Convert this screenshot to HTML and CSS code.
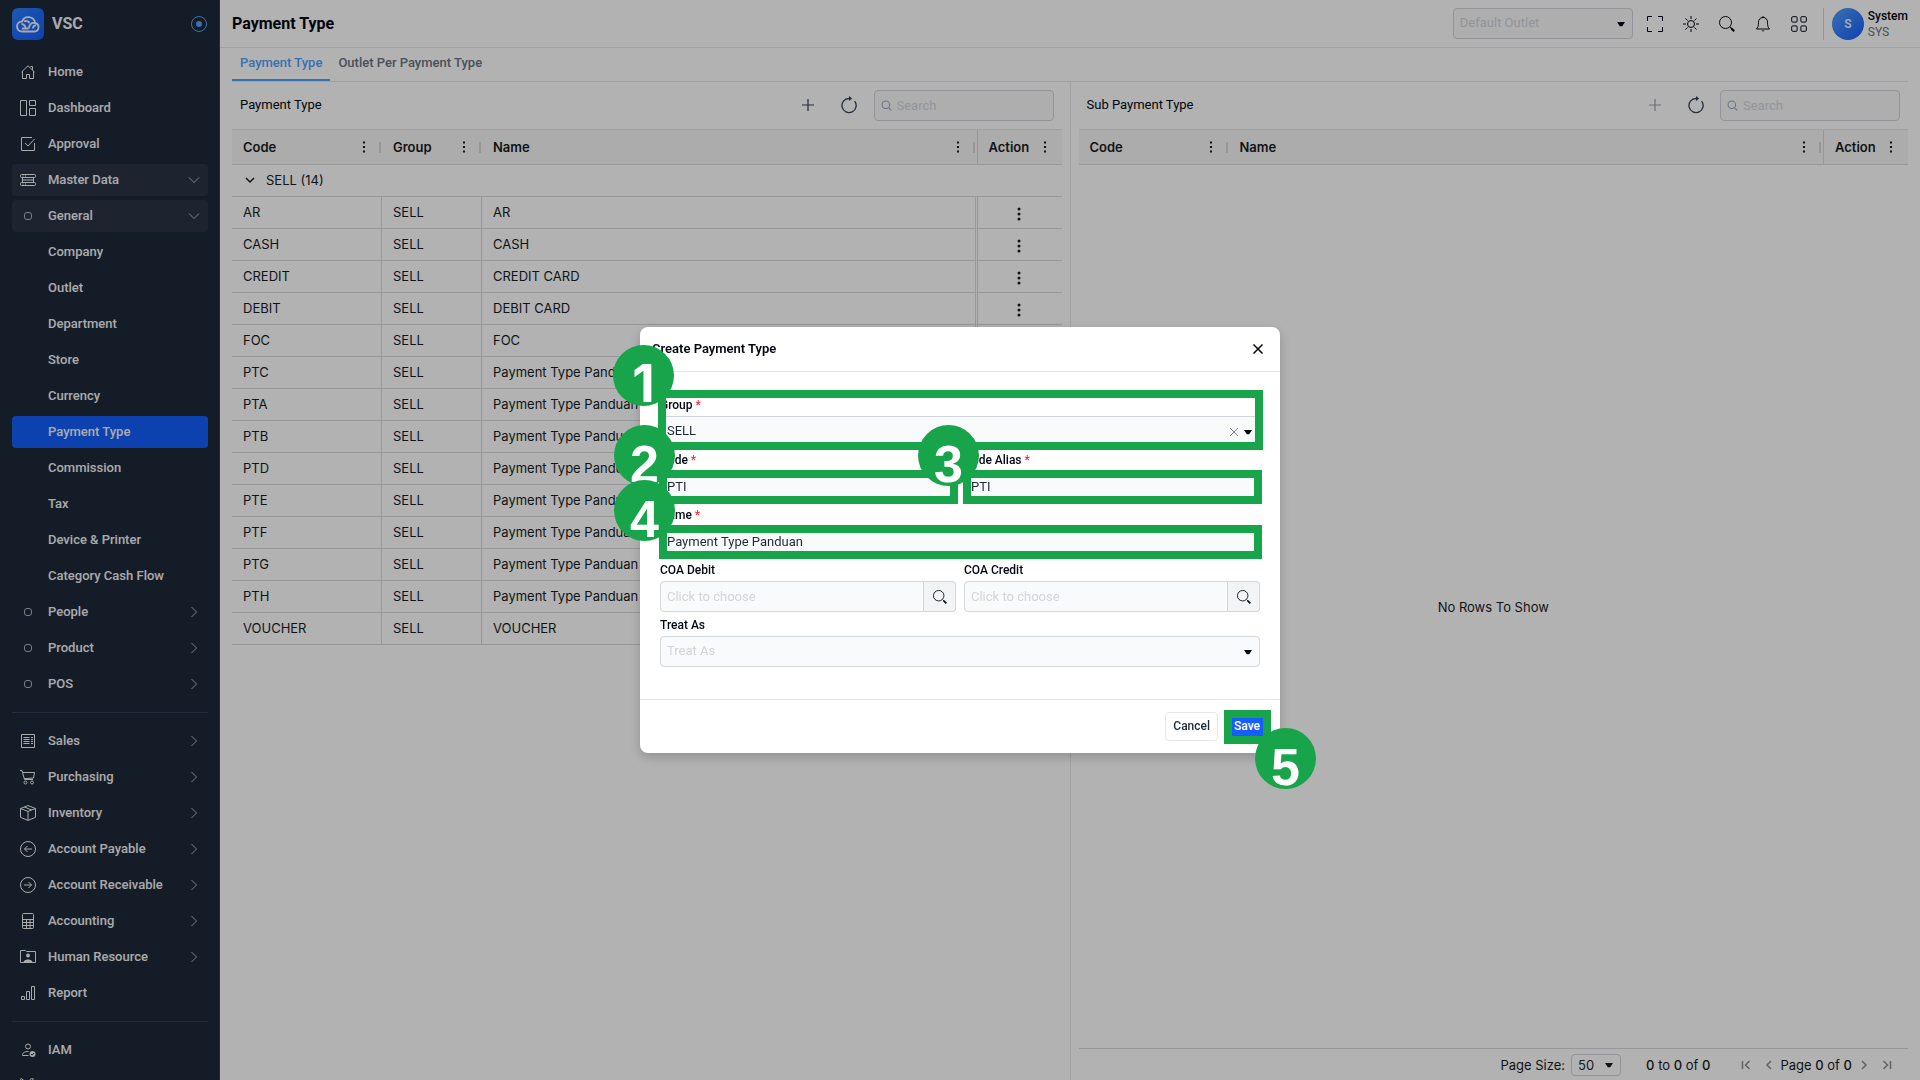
FILE: index.html
```html
<!DOCTYPE html>
<html lang="en">
<head>
<meta charset="utf-8">
<meta name="viewport" content="width=device-width, initial-scale=1">
<title>Payment Type</title>
<link rel="stylesheet" href="styles.css">
</head>
<body>
<svg class="sprite" aria-hidden="true">
  <symbol id="i-home" viewBox="0 0 16 16"><path d="M1.5 8 8 1.8 14.5 8M2.5 7.2v7.3h4v-4h3v4h4V7.2M10.500 2.500h2v3.500"/></symbol>
  <symbol id="i-dash" viewBox="0 0 16 16"><path d="M.5.5h6v15h-6zM9.500.5h6v5h-6zM9.500 8.500h6v7h-6z"/></symbol>
  <symbol id="i-check" viewBox="0 0 16 16"><path d="M12 1.500H1.500v13h13V7M5 7l3 3 6.500-7"/></symbol>
  <symbol id="i-stack" viewBox="0 0 16 16"><rect x=".5" y="2.500" width="15" height="3" rx="1"/><rect x=".5" y="10.500" width="15" height="3" rx="1"/><path d="M2.500 5.500v5M13.500 5.500v5M3 8h10M2.500 4h1M5 4h1M2.500 12h1M5 12h1"/></symbol>
  <symbol id="i-dot" viewBox="0 0 16 16"><rect x="4.500" y="4.500" width="7" height="7" rx="2.500"/></symbol>
  <symbol id="i-down" viewBox="0 0 16 16"><path d="m3 5.500 5 5 5-5"/></symbol>
  <symbol id="i-right" viewBox="0 0 16 16"><path d="m5.500 3 5 5-5 5"/></symbol>
  <symbol id="i-sales" viewBox="0 0 16 16"><path d="M1.500 1.500h13v13h-13zM3.500 4.500h6M3.500 6.500h6M3.500 8.500h6M3.500 10.500h6M11 4.500h2M11 6.500h2M11 8.500h2M11 10.500h2"/></symbol>
  <symbol id="i-cart" viewBox="0 0 16 16"><path d="M0 1.500h2l2.500 9H13M2.800 3.500h11.700l-1 5.500-9.200.7"/><circle cx="5.500" cy="13.500" r="1.500"/><circle cx="12" cy="13.500" r="1.500"/></symbol>
  <symbol id="i-box" viewBox="0 0 16 16"><path d="M8 .6 15.500 3.500v8.800L8 15.400.5 12.300V3.500zM.5 3.500 8 6.400l7.500-2.900M8 6.400v9M4.300 2 11.800 5"/></symbol>
  <symbol id="i-payable" viewBox="0 0 16 16"><circle cx="8" cy="8" r="7.500"/><path d="M12 8H4.500M7.500 5l-3 3 3 3"/></symbol>
  <symbol id="i-receive" viewBox="0 0 16 16"><circle cx="8" cy="8" r="7.500"/><path d="M4 8h7.500M8.500 5l3 3-3 3"/></symbol>
  <symbol id="i-calc" viewBox="0 0 16 16"><rect x="2.500" y=".5" width="11" height="15" rx="1"/><path d="M2.500 6.500h11M2.500 9.500h11M2.500 12.500h11M6.500 6.500v9M10 6.500v9"/></symbol>
  <symbol id="i-human" viewBox="0 0 16 16"><path d="M.5 13.500v-12h5l1 1h9v11zM4 13.500c0-3 8-3 8 0"/><circle class="fill" cx="8" cy="6.500" r="2"/><path class="fill" d="M3.500 13.500c0-4 9-4 9 0z"/></symbol>
  <symbol id="i-bars" viewBox="0 0 16 16"><path d="M1.500 11.500h3v3h-3zM6.500 6.500h3v8h-3zM11.500 1.500h3v13h-3z"/></symbol>
  <symbol id="i-user" viewBox="0 0 16 16"><circle cx="8" cy="4.500" r="2.500"/><path d="M8.500 13.500h-6c0-3 2-4 6-4"/><circle class="fill" cx="12.500" cy="12" r="3"/><path class="mark" d="m11 12 1.200 1.200L14 11"/></symbol>
  <symbol id="i-tools" viewBox="0 0 16 16"><path d="M1 .5 3.500 2 12 10.500l3 3-1.500 1.500-3-3L2 4 .5 1.500zM13.500.8 11.500 3v2h2l2-2c.5 3-2 4.500-4 3.500L4 14c-1.500 1.500-3.500-.500-2.500-2L9 5C8.500 2.500 10.500 0 13.500.8z"/></symbol>
  <symbol id="i-search" viewBox="0 0 16 16"><circle cx="6.500" cy="6.500" r="6"/><path d="m11 11 1.500 1.500"/><path class="bold" d="m12 12 3.200 3.200"/></symbol>
  <symbol id="i-find" viewBox="0 0 16 16"><circle cx="7" cy="7" r="5.500"/><path d="m11 11 4 4"/></symbol>
  <symbol id="i-plus" viewBox="0 0 16 16"><path d="M8 2v12M2 8h12"/></symbol>
  <symbol id="i-reload" viewBox="0 0 16 16"><path d="M8 2.200A6.300 6.300 0 1 0 13 4.600"/><path class="fill" d="M8 0v4.500L10.800 2.200z"/></symbol>
  <symbol id="i-full" viewBox="0 0 16 16"><path d="M.5 5V.5H5M11 .5h4.500V5M15.500 11v4.500H11M5 15.500H.5V11"/></symbol>
  <symbol id="i-sun" viewBox="0 0 16 16"><circle cx="8" cy="8" r="3.500"/><path d="M8 0v3M8 13v3M0 8h3M13 8h3M2.500 2.500l2 2M11.500 11.500l2 2M13.500 2.500l-2 2M4.500 11.500l-2 2"/></symbol>
  <symbol id="i-bell" viewBox="0 0 16 16"><path d="M8 1.500c-3 0-4.500 2-4.500 5 0 3-.500 5-2 6.500h13c-1.500-1.500-2-3.500-2-6.500 0-3-1.500-5-4.500-5zM8 0v1.500"/><path class="fill" d="M6.500 14.500h3L8 15.800z"/></symbol>
  <symbol id="i-grid" viewBox="0 0 16 16"><rect x=".7" y=".7" width="5.400" height="5.400" rx="1"/><rect x="9.900" y=".7" width="5.400" height="5.400" rx="1"/><rect x=".7" y="9.900" width="5.400" height="5.400" rx="1"/><rect x="9.900" y="9.900" width="5.400" height="5.400" rx="1"/></symbol>
  <symbol id="i-dots" viewBox="0 0 16 16"><path class="fill" d="M7 2.500h2v2H7zM7 7h2v2H7zM7 11.500h2v2H7z"/></symbol>
  <symbol id="i-kebab" viewBox="0 0 16 16"><circle class="fill" cx="8" cy="3" r="1.500"/><circle class="fill" cx="8" cy="8" r="1.500"/><circle class="fill" cx="8" cy="13" r="1.500"/></symbol>
  <symbol id="i-caret" viewBox="0 0 16 16"><path class="fill" d="M4 6h8l-2.800 4.200H6.800z"/></symbol>
  <symbol id="i-close" viewBox="0 0 16 16"><path d="m3.500 3.500 9 9M12.500 3.500l-9 9"/></symbol>
  <symbol id="i-group" viewBox="0 0 16 16"><path d="m4 6 4 4 4-4"/></symbol>
  <symbol id="i-first" viewBox="0 0 16 16"><path d="M4.500 4v8M11.500 4l-4 4 4 4"/></symbol>
  <symbol id="i-prev" viewBox="0 0 16 16"><path d="m10 4-4 4 4 4"/></symbol>
  <symbol id="i-next" viewBox="0 0 16 16"><path d="m6 4 4 4-4 4"/></symbol>
  <symbol id="i-last" viewBox="0 0 16 16"><path d="M11.500 4v8M4.500 4l4 4-4 4"/></symbol>
</svg>

<div class="app">
  <aside class="sidebar">
    <div class="brand">
      <svg class="logo" viewBox="0 0 32 32" aria-hidden="true">
        <defs><linearGradient id="lg" x1="0" y1="0" x2="1" y2="1"><stop offset="0" stop-color="#2b7fff"/><stop offset="1" stop-color="#155dfc"/></linearGradient></defs>
        <rect width="32" height="32" rx="6" fill="url(#lg)"/>
        <path d="M10 23.500h12.500a4.300 4.300 0 0 0 .6-8.500A6.800 6.800 0 0 0 10 13.500a5 5 0 0 0 0 10zM10 20.500h6.500M13.500 20.500a4 4 0 0 0-4-4.500M17 20.500c0-4 2.500-6 5.500-5.500M21 20.500c0-2 1-3.200 3-3.200M17.500 15c-1-2-3.500-2.500-5.500-1.500" fill="none" stroke="#f3f4f6" stroke-width="1.800"/>
      </svg>
      <span class="brand-name">VSC</span>
      <button class="pin" type="button" aria-label="Pin menu"><span></span></button>
    </div>
    <nav class="nav" aria-label="Main">
      <a href="#"><svg><use href="#i-home"/></svg><span>Home</span></a>
      <a href="#"><svg><use href="#i-dash"/></svg><span>Dashboard</span></a>
      <a href="#"><svg><use href="#i-check"/></svg><span>Approval</span></a>
      <a class="open" href="#"><svg><use href="#i-stack"/></svg><span>Master Data</span><svg class="chev"><use href="#i-down"/></svg></a>
      <a class="open" href="#"><svg class="dim"><use href="#i-dot"/></svg><span>General</span><svg class="chev"><use href="#i-down"/></svg></a>
      <a class="sub" href="#"><span>Company</span></a>
      <a class="sub" href="#"><span>Outlet</span></a>
      <a class="sub" href="#"><span>Department</span></a>
      <a class="sub" href="#"><span>Store</span></a>
      <a class="sub" href="#"><span>Currency</span></a>
      <a class="sub active" href="#" aria-current="page"><span>Payment Type</span></a>
      <a class="sub" href="#"><span>Commission</span></a>
      <a class="sub" href="#"><span>Tax</span></a>
      <a class="sub" href="#"><span>Device &amp; Printer</span></a>
      <a class="sub" href="#"><span>Category Cash Flow</span></a>
      <a href="#"><svg class="dim"><use href="#i-dot"/></svg><span>People</span><svg class="chev"><use href="#i-right"/></svg></a>
      <a href="#"><svg class="dim"><use href="#i-dot"/></svg><span>Product</span><svg class="chev"><use href="#i-right"/></svg></a>
      <a href="#"><svg class="dim"><use href="#i-dot"/></svg><span>POS</span><svg class="chev"><use href="#i-right"/></svg></a>
      <hr>
      <a href="#"><svg><use href="#i-sales"/></svg><span>Sales</span><svg class="chev"><use href="#i-right"/></svg></a>
      <a href="#"><svg><use href="#i-cart"/></svg><span>Purchasing</span><svg class="chev"><use href="#i-right"/></svg></a>
      <a href="#"><svg><use href="#i-box"/></svg><span>Inventory</span><svg class="chev"><use href="#i-right"/></svg></a>
      <a href="#"><svg><use href="#i-payable"/></svg><span>Account Payable</span><svg class="chev"><use href="#i-right"/></svg></a>
      <a href="#"><svg><use href="#i-receive"/></svg><span>Account Receivable</span><svg class="chev"><use href="#i-right"/></svg></a>
      <a href="#"><svg><use href="#i-calc"/></svg><span>Accounting</span><svg class="chev"><use href="#i-right"/></svg></a>
      <a href="#"><svg><use href="#i-human"/></svg><span>Human Resource</span><svg class="chev"><use href="#i-right"/></svg></a>
      <a href="#"><svg><use href="#i-bars"/></svg><span>Report</span></a>
      <hr>
      <a href="#"><svg><use href="#i-user"/></svg><span>IAM</span></a>
      <a href="#" aria-label="Tools"><svg><use href="#i-tools"/></svg></a>
    </nav>
  </aside>

  <main class="main">
    <header class="topbar">
      <h1>Payment Type</h1>
      <div class="select top-select">
        <select class="empty" aria-label="Default Outlet"><option>Default Outlet</option></select>
        <svg><use href="#i-caret"/></svg>
      </div>
      <div class="tools">
        <button type="button" aria-label="Full screen"><svg><use href="#i-full"/></svg></button>
        <button type="button" aria-label="Theme"><svg><use href="#i-sun"/></svg></button>
        <button type="button" aria-label="Search"><svg><use href="#i-search"/></svg></button>
        <button type="button" aria-label="Notifications"><svg><use href="#i-bell"/></svg></button>
        <button type="button" aria-label="Apps"><svg><use href="#i-grid"/></svg></button>
      </div>
      <div class="user">
        <span class="avatar">S</span>
        <div><strong>System</strong><small>SYS</small></div>
      </div>
    </header>

    <div class="content">
      <nav class="tabs" aria-label="Sections">
        <a class="current" href="#">Payment Type</a>
        <a href="#">Outlet Per Payment Type</a>
      </nav>
      <div class="panes">
        <section class="pane">
          <div class="toolbar">
            <h2>Payment Type</h2>
            <button type="button" aria-label="Add"><svg><use href="#i-plus"/></svg></button>
            <button type="button" aria-label="Reload"><svg class="big"><use href="#i-reload"/></svg></button>
            <label class="search"><svg><use href="#i-find"/></svg><input type="search" placeholder="Search" aria-label="Search payment type"></label>
          </div>
          <table class="grid">
            <colgroup><col class="c-code"><col class="c-group"><col><col class="c-action"></colgroup>
            <thead><tr>
              <th><div class="th"><span>Code</span><svg><use href="#i-dots"/></svg><i></i></div></th>
              <th><div class="th"><span>Group</span><svg><use href="#i-dots"/></svg><i></i></div></th>
              <th><div class="th"><span>Name</span><svg><use href="#i-dots"/></svg><i></i></div></th>
              <th class="action"><div class="th"><span>Action</span><svg><use href="#i-dots"/></svg></div></th>
            </tr></thead>
            <tbody>
              <tr class="group"><td colspan="4"><div><svg><use href="#i-group"/></svg>SELL (14)</div></td></tr>
              <tr><td>AR</td><td>SELL</td><td>AR</td><td class="action"><button type="button" aria-label="Actions"><svg><use href="#i-kebab"/></svg></button></td></tr>
              <tr><td>CASH</td><td>SELL</td><td>CASH</td><td class="action"><button type="button" aria-label="Actions"><svg><use href="#i-kebab"/></svg></button></td></tr>
              <tr><td>CREDIT</td><td>SELL</td><td>CREDIT CARD</td><td class="action"><button type="button" aria-label="Actions"><svg><use href="#i-kebab"/></svg></button></td></tr>
              <tr><td>DEBIT</td><td>SELL</td><td>DEBIT CARD</td><td class="action"><button type="button" aria-label="Actions"><svg><use href="#i-kebab"/></svg></button></td></tr>
              <tr><td>FOC</td><td>SELL</td><td>FOC</td><td class="action"><button type="button" aria-label="Actions"><svg><use href="#i-kebab"/></svg></button></td></tr>
              <tr><td>PTC</td><td>SELL</td><td>Payment Type Panduan</td><td class="action"><button type="button" aria-label="Actions"><svg><use href="#i-kebab"/></svg></button></td></tr>
              <tr><td>PTA</td><td>SELL</td><td>Payment Type Panduan</td><td class="action"><button type="button" aria-label="Actions"><svg><use href="#i-kebab"/></svg></button></td></tr>
              <tr><td>PTB</td><td>SELL</td><td>Payment Type Panduan</td><td class="action"><button type="button" aria-label="Actions"><svg><use href="#i-kebab"/></svg></button></td></tr>
              <tr><td>PTD</td><td>SELL</td><td>Payment Type Panduan</td><td class="action"><button type="button" aria-label="Actions"><svg><use href="#i-kebab"/></svg></button></td></tr>
              <tr><td>PTE</td><td>SELL</td><td>Payment Type Panduan</td><td class="action"><button type="button" aria-label="Actions"><svg><use href="#i-kebab"/></svg></button></td></tr>
              <tr><td>PTF</td><td>SELL</td><td>Payment Type Panduan</td><td class="action"><button type="button" aria-label="Actions"><svg><use href="#i-kebab"/></svg></button></td></tr>
              <tr><td>PTG</td><td>SELL</td><td>Payment Type Panduan U</td><td class="action"><button type="button" aria-label="Actions"><svg><use href="#i-kebab"/></svg></button></td></tr>
              <tr><td>PTH</td><td>SELL</td><td>Payment Type Panduan U</td><td class="action"><button type="button" aria-label="Actions"><svg><use href="#i-kebab"/></svg></button></td></tr>
              <tr><td>VOUCHER</td><td>SELL</td><td>VOUCHER</td><td class="action"><button type="button" aria-label="Actions"><svg><use href="#i-kebab"/></svg></button></td></tr>
            </tbody>
          </table>
        </section>
        <div class="splitter"></div>
        <section class="pane">
          <div class="toolbar">
            <h2>Sub Payment Type</h2>
            <button type="button" aria-label="Add" disabled><svg><use href="#i-plus"/></svg></button>
            <button type="button" aria-label="Reload"><svg class="big"><use href="#i-reload"/></svg></button>
            <label class="search"><svg><use href="#i-find"/></svg><input type="search" placeholder="Search" aria-label="Search sub payment type"></label>
          </div>
          <table class="grid">
            <colgroup><col class="c-code"><col><col class="c-action"></colgroup>
            <thead><tr>
              <th><div class="th"><span>Code</span><svg><use href="#i-dots"/></svg><i></i></div></th>
              <th><div class="th"><span>Name</span><svg><use href="#i-dots"/></svg><i></i></div></th>
              <th class="action"><div class="th"><span>Action</span><svg><use href="#i-dots"/></svg></div></th>
            </tr></thead>
          </table>
          <p class="no-rows">No Rows To Show</p>
          <footer class="pager">
            <label for="page-size">Page Size:</label>
            <div class="select page-select">
              <select id="page-size"><option>50</option></select>
              <svg><use href="#i-caret"/></svg>
            </div>
            <span class="range"><b>0</b> to <b>0</b> of <b>0</b></span>
            <div class="pages">
              <button type="button" aria-label="First page" disabled><svg><use href="#i-first"/></svg></button>
              <button type="button" aria-label="Previous page" disabled><svg><use href="#i-prev"/></svg></button>
              <span>Page <b>0</b> of <b>0</b></span>
              <button type="button" aria-label="Next page" disabled><svg><use href="#i-next"/></svg></button>
              <button type="button" aria-label="Last page" disabled><svg><use href="#i-last"/></svg></button>
            </div>
          </footer>
        </section>
      </div>
    </div>
  </main>
</div>

<div class="backdrop">
  <form class="modal" role="dialog" aria-labelledby="modal-title">
    <header class="modal-head">
      <h2 id="modal-title">Create Payment Type</h2>
      <button type="button" aria-label="Close"><svg><use href="#i-close"/></svg></button>
    </header>
    <div class="modal-body">
      <div class="field wide step-group">
        <label for="f-group">Group <em>*</em></label>
        <div class="select clearable">
          <select id="f-group"><option>SELL</option></select>
          <button type="button" aria-label="Clear"><svg><use href="#i-close"/></svg></button>
          <svg><use href="#i-caret"/></svg>
        </div>
        <div class="step"><span>1</span></div>
      </div>
      <div class="field">
        <label for="f-code">Code <em>*</em></label>
        <div class="control"><input id="f-code" type="text" value="PTI"><div class="step"><span>2</span></div></div>
      </div>
      <div class="field">
        <label for="f-alias">Code Alias <em>*</em></label>
        <div class="control"><input id="f-alias" type="text" value="PTI"><div class="step"><span>3</span></div></div>
      </div>
      <div class="field wide">
        <label for="f-name">Name <em>*</em></label>
        <div class="control"><input id="f-name" type="text" value="Payment Type Panduan"><div class="step"><span>4</span></div></div>
      </div>
      <div class="field">
        <label for="f-debit">COA Debit</label>
        <div class="lookup"><input id="f-debit" type="text" placeholder="Click to choose"><button type="button" aria-label="Find debit account"><svg><use href="#i-search"/></svg></button></div>
      </div>
      <div class="field">
        <label for="f-credit">COA Credit</label>
        <div class="lookup"><input id="f-credit" type="text" placeholder="Click to choose"><button type="button" aria-label="Find credit account"><svg><use href="#i-search"/></svg></button></div>
      </div>
      <div class="field wide">
        <label for="f-treat">Treat As</label>
        <div class="select">
          <select id="f-treat" class="empty"><option>Treat As</option></select>
          <svg><use href="#i-caret"/></svg>
        </div>
      </div>
    </div>
    <footer class="modal-foot">
      <button class="btn" type="button">Cancel</button>
      <div class="control save"><button class="btn primary" type="button">Save</button><div class="step step-save"><span>5</span></div></div>
    </footer>
  </form>
</div>
</body>
</html>
```
FILE: styles.css
```css
* { box-sizing: border-box; }
html, body { height: 100%; }
body {
  margin: 0;
  font: 400 13px/20px Roboto, "Liberation Sans", sans-serif;
  color: #030712;
  background: #fff;
  overflow: hidden;
}
h1, h2, p { margin: 0; }
a { color: inherit; text-decoration: none; }
button, input, select { font: inherit; color: inherit; margin: 0; }
button { padding: 0; border: 0; background: none; display: grid; place-items: center; }
svg { width: 16px; height: 16px; flex: none; fill: none; stroke: currentColor; stroke-width: 1; display: block; }
.sprite { position: absolute; width: 0; height: 0; }
.fill { fill: currentColor; stroke: none; }
.bold { stroke-width: 2; }
.mark { stroke: #1e2939; }

.app { display: grid; grid-template-columns: 220px minmax(0, 1fr); height: 100vh; }

/* Sidebar */
.sidebar {
  background: #1e2939;
  border-right: 1px solid #364153;
  color: #f3f4f6;
  padding: 8px 11px 0 12px;
  overflow: hidden;
}
.brand { display: flex; align-items: center; height: 32px; margin-bottom: 16px; }
.logo { width: 32px; height: 32px; stroke: none; }
.brand-name { flex: 1; margin-left: 8px; font-size: 16px; font-weight: 700; }
.pin { width: 16px; height: 16px; margin-right: 1px; border: 1px solid #51a2ff; border-radius: 50%; }
.pin span { width: 6px; height: 6px; border-radius: 50%; background: #51a2ff; }
.nav { display: flex; flex-direction: column; gap: 4px; }
.nav a {
  flex: none;
  display: flex;
  align-items: center;
  height: 32px;
  padding: 0 6px 0 8px;
  gap: 12px;
  border-radius: 4px;
  font-weight: 500;
}
.nav a span { flex: 1; }
.nav .sub { padding-left: 36px; }
.nav .open { background: #2a3446; }
.nav .active { background: #155dfc; }
.nav .dim, .nav .chev { opacity: .7; }
.nav hr { flex: none; width: 100%; height: 1px; margin: 8px 0; border: 0; background: #364153; }

/* Top bar */
.main { display: flex; flex-direction: column; min-width: 0; }
.topbar {
  display: flex;
  align-items: center;
  height: 48px;
  padding: 0 12px;
  border-bottom: 1px solid #e5e7eb;
}
.topbar h1 { flex: 1; font-size: 16px; font-weight: 700; }
.top-select { width: 180px; }
.tools { display: flex; margin: 0 6px 0 4px; }
.tools button { width: 36px; height: 32px; }
.user { display: flex; gap: 4px; height: 32px; padding-left: 8px; border-left: 1px solid #d1d5dc; }
.avatar {
  width: 32px; height: 32px; border-radius: 50%;
  display: grid; place-items: center;
  font-size: 12px; font-weight: 600; color: #f3f4f6;
  background: linear-gradient(135deg, #51a2ff, #155dfc);
}
.user strong, .user small { display: block; font-size: 12px; line-height: 16px; }
.user strong { font-weight: 500; }
.user small { color: #6a7282; }

/* Form controls */
.select { display: grid; align-items: center; }
.select > * { grid-row: 1; grid-column: 1; }
.select > svg { justify-self: end; margin-right: 4px; pointer-events: none; }
select, input {
  appearance: none;
  width: 100%;
  height: 31px;
  padding: 0 6px;
  border: 1px solid #d1d5dc;
  border-radius: 4px;
  background: #f9fafb;
  color: #1e2939;
  outline: 0;
}
select { padding-bottom: 2px; }
.empty, ::placeholder { color: #d1d5dc; opacity: 1; }
.clearable > button { justify-self: end; margin-right: 19px; color: #6a7282; }
.clearable > button svg { width: 14px; height: 14px; }

/* Content */
.content { flex: 1; display: flex; flex-direction: column; padding: 0 12px; min-height: 0; }
.tabs { display: flex; height: 34px; border-bottom: 1px solid #e5e7eb; font-weight: 500; color: #6a7282; }
.tabs a { padding: 5px 8px 0; }
.tabs .current { color: #51a2ff; border-bottom: 2px solid #51a2ff; }
.panes { flex: 1; display: flex; min-height: 0; }
.pane { flex: 1; min-width: 0; display: flex; flex-direction: column; }
.splitter { width: 1px; margin: 0 8px; background: #e5e7eb; }
.toolbar { display: flex; align-items: center; height: 47px; padding: 0 8px; color: #364153; }
.toolbar h2 { flex: 1; padding-bottom: 2px; font-size: 13px; font-weight: 400; color: #030712; }
.toolbar button { width: 41px; height: 32px; padding-bottom: 2px; }
.toolbar .big { width: 18px; height: 18px; }
.toolbar button:disabled { opacity: .5; }
.toolbar button svg { stroke-width: 1.2; }
.search { display: grid; align-items: center; width: 180px; margin-left: 4px; color: #6a7282; }
.search > * { grid-row: 1; grid-column: 1; }
.search svg { width: 11px; height: 11px; margin-left: 7px; z-index: 1; stroke-width: 1.5; }
.search input { padding-left: 22px; }

/* Data grid */
.grid, .no-rows, .pager { font-family: Inter, "Liberation Sans", sans-serif; font-size: 13px; line-height: 16px; color: #181d1f; }
.grid { width: 100%; table-layout: fixed; border-collapse: separate; border-spacing: 0; }
.c-code { width: 150px; }
.c-group { width: 100px; }
.c-action { width: 86px; }
.grid th {
  height: 36px;
  padding: 0 1px 0 11px;
  background: #f6f6f6;
  border-top: 1px solid #e5e7eb;
  border-bottom: 1px solid #d8d8d8;
  font-weight: 600;
  text-align: left;
}
.th { display: flex; align-items: center; }
.th span { flex: 1; }
.th i { width: 2px; height: 11px; margin-left: 7px; background: #d8d8d8; }
.grid td {
  height: 32px;
  padding: 0 11px 2px;
  border-right: 1px solid #d8d8d8;
  border-bottom: 1px solid #d8d8d8;
}
.grid .action { border-left: 1px solid #fff; border-right: 0; box-shadow: inset 1px 0 #d8d8d8; }
.grid th.action { border-left-color: #f6f6f6; padding: 0 9px 0 12px; }
.grid td.action { padding: 3px 0 0; }
.grid td.action button { margin: 0 auto; }
.grid .group td { border-right: 0; }
.group div { display: flex; align-items: center; gap: 8px; }
.group svg { stroke-width: 1.5; margin-left: -1px; }
.no-rows { flex: 1; display: grid; place-items: center; }

.pager { display: flex; align-items: center; justify-content: flex-end; height: 32px; padding-right: 10px; border-top: 1px solid #d8d8d8; }
.page-select { width: 50px; margin: 0 25px 0 6px; }
.page-select select { height: 22px; padding-bottom: 0; background: #fff; }
.pager b { font-weight: 500; }
.range { margin-right: 24px; }
.pages { display: flex; align-items: center; }
.pages button { width: 23px; color: #8b8e8f; }
.pages svg { stroke-width: 1.5; }

/* Modal */
.backdrop { position: fixed; inset: 0; display: grid; place-items: center; background: rgba(0, 0, 0, .3); }
.modal { width: 640px; max-width: 100%; background: #fff; border-radius: 8px; box-shadow: 0 4px 12px rgba(0, 0, 0, .2); }
.modal-head { display: flex; align-items: center; height: 45px; padding: 0 14px 0 12px; border-bottom: 1px solid #e5e7eb; }
.modal-head h2 { flex: 1; font-size: 13px; font-weight: 600; }
.modal-head svg { stroke-width: 1.5; }
.modal-body { display: grid; grid-template-columns: 1fr 1fr; column-gap: 8px; padding: 20px 20px 32px; }
.wide { grid-column: 1 / -1; }
.field > label { display: block; height: 24px; padding-top: 5px; font-size: 12px; line-height: 16px; font-weight: 500; }
.field em { font-style: normal; color: #fb2c36; }
.lookup { display: flex; }
.lookup input { flex: 1; border-radius: 4px 0 0 4px; }
.lookup button { width: 32px; height: 31px; border: 1px solid #d1d5dc; border-left: 0; border-radius: 0 4px 4px 0; background: #f3f4f6; color: #030712; }
.lookup svg { width: 14px; height: 14px; }
.modal-foot { display: flex; justify-content: flex-end; gap: 8px; padding: 12px; border-top: 1px solid #e5e7eb; }
.btn { height: 29px; padding: 0 7px 1px; border: 1px solid #e5e7eb; border-radius: 4px; font-size: 12px; font-weight: 500; color: #1e2939; }
.primary { border-color: #155dfc; background: #155dfc; color: #fff; }

/* Numbered callouts lie over the fields they point at */
.control, .step-group { position: relative; }
.step { position: absolute; inset: -1px -2px -2px -1px; border: 8px solid #18a44b; pointer-events: none; }
.step-group > .step, .step-save { inset: -2px -3px -3px -2px; }
.step span {
  position: absolute;
  top: -53px;
  left: -53px;
  width: 61px;
  height: 61px;
  border-radius: 50%;
  background: #18a44b;
  color: #fff;
  font: 700 52px/78px "Liberation Sans", sans-serif;
  text-align: center;
}
.step-group .step span { font-family: Inter, sans-serif; }
.step-save span { top: auto; left: auto; right: -53px; bottom: -53px; }
```
